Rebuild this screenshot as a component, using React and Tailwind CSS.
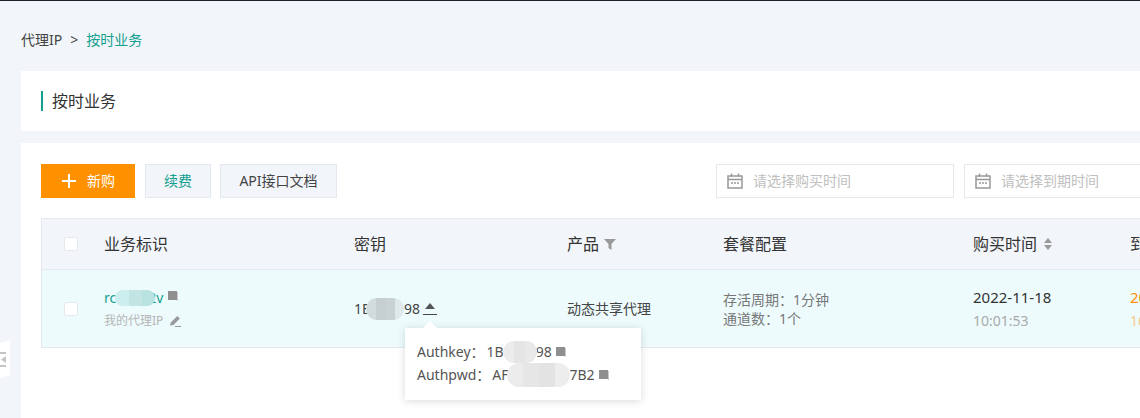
import React from "react";

const font = { fontFamily: '"Noto Sans", "Noto Sans CJK SC", sans-serif' };

function CopyIcon({ className = "" }) {
  return (
    <svg width="10" height="10" viewBox="0 0 10 10" className={`shrink-0 ${className}`}>
      <rect x="0" y="0" width="9" height="9" fill="#8f8f8f" />
      <rect x="9" y="1" width="1" height="9" fill="#c9c9c9" />
    </svg>
  );
}

// mosaic smudge over the hidden part of a key
function Blob({ className, tones }) {
  return (
    <span className={`relative z-10 flex shrink-0 overflow-hidden rounded-full ${className}`}>
      {tones.map((tone, i) => (
        <span key={i} className="flex-1" style={{ backgroundColor: tone }} />
      ))}
    </span>
  );
}

function CalendarIcon() {
  return (
    <svg width="16" height="16" viewBox="0 0 16 16" fill="none" stroke="#999" strokeWidth="1.5" className="shrink-0">
      <rect x="1" y="3" width="14" height="12" />
      <path d="M1 6.5h14M4.5 0.5v3M11.5 0.5v3" />
      <path d="M4 10h2M7 10h2M10 10h2" strokeWidth="1.3" />
    </svg>
  );
}

function DateInput({ text, className }) {
  return (
    <div className={`h-[34px] shrink-0 flex items-center border border-[#e4e9f0] bg-white pl-[10px] ${className}`}>
      <CalendarIcon />
      <span className="ml-[10px] text-sm text-[#c0c0c0]">{text}</span>
    </div>
  );
}

function Checkbox() {
  return <div className="w-[14px] h-[14px] bg-white border border-[#e6e9ee] rounded-[2px]" />;
}

export default function App() {
  return (
    <div style={font} className="w-[1140px] h-[418px] overflow-hidden bg-[#f2f6fa] border-t border-[#1c2228] pl-[21px] relative">
      {/* breadcrumb */}
      <div className="h-[70px] pt-[29px] text-sm leading-5 text-[#444] flex">
        <span>代理IP</span>
        <span className="ml-2 mr-[8px]">&gt;</span>
        <span className="text-[#14a08f]">按时业务</span>
      </div>

      {/* title */}
      <div className="w-[1119px] h-[60px] bg-white pl-5 flex items-center">
        <div className="w-[2px] h-5 bg-[#14a08f]" />
        <span className="ml-[9px] text-base text-[#333]">按时业务</span>
      </div>

      {/* main card */}
      <div className="mt-3 w-[1119px] h-[275px] bg-white pl-5 pt-[21px]">
        <div className="flex h-[34px]">
          <button className="w-[94px] h-[34px] shrink-0 bg-[#ff9000] text-white text-sm flex items-center pl-[21px]">
            <svg width="14" height="14" viewBox="0 0 14 14" stroke="#fff" strokeWidth="2">
              <path d="M7 0v14M0 7h14" />
            </svg>
            <span className="ml-[11px]">新购</span>
          </button>
          <button className="ml-[10px] w-[66px] h-[34px] shrink-0 bg-[#f2f5fa] border border-[#e4e9f0] text-sm text-[#14a08f]">续费</button>
          <button className="ml-[9px] w-[117px] h-[34px] shrink-0 bg-[#f2f5fa] border border-[#e4e9f0] text-sm text-[#444]">API接口文档</button>
          <DateInput text="请选择购买时间" className="ml-[379px] w-[238px]" />
          <DateInput text="请选择到期时间" className="ml-[10px] w-[238px]" />
        </div>

        {/* table */}
        <div className="mt-5 w-[1200px] border border-[#e4e9f0]">
          <div className="h-[51px] bg-[#f2f5fa] border-b border-[#e4e9f0] flex items-center text-base text-[#333]">
            <div className="w-[62px] pl-[22px]"><Checkbox /></div>
            <div className="w-[250px]">业务标识</div>
            <div className="w-[213px]">密钥</div>
            <div className="w-[156px] flex items-center">
              产品
              <svg width="12" height="11" viewBox="0 0 12 11" className="ml-[5px]">
                <path d="M0 0h12L7.5 5v6L4.5 9V5z" fill="#999" />
              </svg>
            </div>
            <div className="w-[250px]">套餐配置</div>
            <div className="w-[157px] flex items-center">
              购买时间
              <svg width="8" height="12" viewBox="0 0 8 12" className="ml-[7px]">
                <path d="M4 0l4 5H0zM4 12L0 7h8z" fill="#999" />
              </svg>
            </div>
            <div>到期时间</div>
          </div>

          <div className="h-[77px] bg-[#edfbfd] flex items-center text-sm text-[#444]">
            <div className="w-[62px] pl-[22px]"><Checkbox /></div>
            <div className="w-[250px]">
              <div className="flex items-center h-5 text-[#14a08f]">
                rc
                <Blob className="w-[40px] h-4 -ml-[1px] -mr-[7px]" tones={["#cdeeee", "#c2e5e4", "#b8e2e0"]} />
                2v
                <CopyIcon className="ml-[5px] mb-1" />
              </div>
              <div className="flex items-center mt-1 h-[18px] text-xs text-[#b5b5b5]">
                我的代理IP
                <svg width="12" height="12" viewBox="0 0 12 12" className="ml-[6px]">
                  <path d="M1 10.5l.8-3L8.3 1l2.6 2.6-6.5 6.4zM6 11h6v1H6z" fill="#999" />
                </svg>
              </div>
            </div>
            <div className="w-[213px] flex items-center">
              1B
              <Blob className="w-[38px] h-[22px] -ml-[5px] -my-1" tones={["#d3dcdc", "#c6cfd0", "#c9d2d2", "#dfe9ea"]} />
              98
              <span className="ml-[3px] border-b border-[#444] h-[13px] flex items-start">
                <svg width="14" height="8" viewBox="0 0 14 8"><path d="M7 1l5 6H2z" fill="#555" /></svg>
              </span>
            </div>
            <div className="w-[156px]">动态共享代理</div>
            <div className="w-[250px] text-[#777] leading-[19px]">
              <div>存活周期：1分钟</div>
              <div>通道数：1个</div>
            </div>
            <div className="w-[157px]">
              <div className="text-[15px] text-[#333] leading-6">2022-11-18</div>
              <div className="text-[#aaa] leading-6">10:01:53</div>
            </div>
            <div>
              <div className="text-[15px] text-[#ff9000] leading-6">2022-11-18</div>
              <div className="text-[#f8c98a] leading-6">16:01:53</div>
            </div>
          </div>
        </div>
      </div>

      {/* popover */}
      <div className="absolute left-[405px] top-[327px] w-[236px] h-[72px] bg-white shadow-[0_1px_8px_rgba(0,0,0,0.15)] pl-3 pt-3 text-sm text-[#555] leading-[23px]">
        <div className="absolute left-[20px] -top-[5px] w-[10px] h-[10px] bg-white rotate-45" />
        <div className="relative flex items-center">
          <span className="mr-[2px]">Authkey：</span>1B
          <Blob className="w-[34px] h-[22px] -ml-[1px] -mr-[1px] -my-1" tones={["#ececec", "#e5e5e5", "#e9e9e9"]} />
          98
          <CopyIcon className="ml-[4px]" />
        </div>
        <div className="relative flex items-center">
          <span className="mr-[2px]">Authpwd：</span>AF
          <Blob className="w-[63px] h-6 -my-1 -ml-[1px] -mr-[1px]" tones={["#ececec", "#e6e6e6", "#e3e3e3", "#ededed"]} />
          7B2
          <CopyIcon className="ml-[4px]" />
        </div>
      </div>

      {/* sidebar handle */}
      <div className="absolute left-0 top-[339px] w-[10px] h-[38px] bg-white flex items-center [clip-path:polygon(0_8%,100%_0,100%_92%,0_100%)]">
        <svg width="6" height="15" viewBox="0 0 6 15">
          <path d="M0 0h6v2H0zM0 13h6v2H0zM6 4v7L1 7.5z" fill="#c4c4c4" />
        </svg>
      </div>
    </div>
  );
}
